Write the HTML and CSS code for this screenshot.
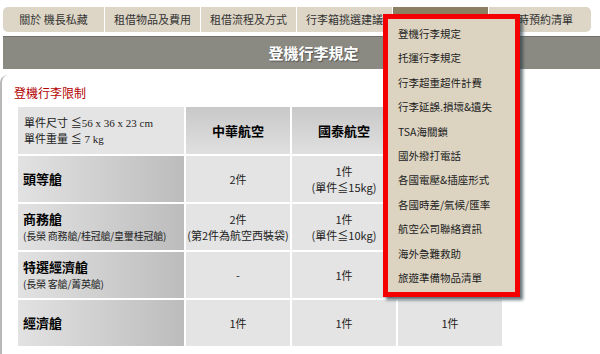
FILE: index.html
```html
<!DOCTYPE html>
<html lang="zh-Hant">
<head>
    <meta charset="UTF-8"/>
    <title>登機行李規定</title>
    <link rel="stylesheet" href="styles.css">
</head>
<body>
<ul class="tabs">
    <li class="tab">關於 機長私藏</li>
    <li class="tab">租借物品及費用</li>
    <li class="tab">租借流程及方式</li>
    <li class="tab">行李箱挑選建議</li>
    <li class="tab active">行李規定及須知</li>
    <li class="tab last">即時預約清單</li>
</ul>

<div class="title-bar">登機行李規定</div>

<div class="content">
    <h2 class="section-title">登機行李限制</h2>
    <table class="rules">
        <tr class="head">
            <td class="limit">單件尺寸 ≦56 x 36 x 23 cm<br/>單件重量 ≦ 7 kg</td>
            <th>中華航空</th>
            <th>國泰航空</th>
            <th></th>
        </tr>
        <tr>
            <td class="cabin"><b>頭等艙</b></td>
            <td>2件</td>
            <td>1件<br/>(單件≦15kg)</td>
            <td></td>
        </tr>
        <tr>
            <td class="cabin"><b>商務艙</b><br/><span class="sub">(長榮 商務艙/桂冠艙/皇璽桂冠艙)</span></td>
            <td>2件<br/>(第2件為航空西裝袋)</td>
            <td>1件<br/>(單件≦10kg)</td>
            <td></td>
        </tr>
        <tr>
            <td class="cabin"><b>特選經濟艙</b><br/><span class="sub">(長榮 客艙/菁英艙)</span></td>
            <td>-</td>
            <td>1件</td>
            <td></td>
        </tr>
        <tr>
            <td class="cabin"><b>經濟艙</b></td>
            <td>1件</td>
            <td>1件</td>
            <td>1件</td>
        </tr>
    </table>
</div>

<ul class="dropdown">
    <li>登機行李規定</li>
    <li>托運行李規定</li>
    <li>行李超重超件計費</li>
    <li>行李延誤.損壞&amp;遺失</li>
    <li>TSA海關鎖</li>
    <li>國外撥打電話</li>
    <li>各國電壓&amp;插座形式</li>
    <li>各國時差/氣候/匯率</li>
    <li>航空公司聯絡資訊</li>
    <li>海外急難救助</li>
    <li>旅遊準備物品清單</li>
</ul>
</body>
</html>
```

FILE: styles.css
```css
body {
    margin: 0;
    background-color: #fff;
    font-family: "Noto Sans CJK TC", "Noto Sans", sans-serif;
    color: #222;
    overflow: hidden;
}

.tabs {
    list-style: none;
    margin: 7px 0 0 3px;
    padding: 0;
    display: flex;
    height: 25px;
}

.tab {
    width: 95px;
    margin-right: 1px;
    background-color: #ddd6c6;
    font-size: 11px;
    line-height: 25px;
    text-align: center;
    color: #333;
}

.tab:first-child {
    width: 101px;
    border-radius: 5px 0 0 5px;
}

.tab.active {
    background-color: #8d8062;
    color: #3a3428;
}

.tab.last {
    width: 102px;
    border-radius: 0 5px 5px 0;
}

.title-bar {
    margin: 4px 0 0 3px;
    height: 32px;
    border-top: 1px solid #707069;
    background-color: #8b8a82;
    color: #fff;
    font-size: 15px;
    font-weight: bold;
    line-height: 32px;
    text-align: center;
    padding-left: 24px;
    text-shadow: 1px 1px 1px #555;
}

.content {
    margin-top: 6px;
    border-left: 2px solid #b8b8b8;
    border-top-left-radius: 8px;
    padding: 10px 0 0 14px;
    height: 270px;
}

.section-title {
    margin: 0 0 4px -2px;
    font-size: 12px;
    font-weight: normal;
    color: #b20000;
    line-height: 16px;
}

.rules {
    border-collapse: collapse;
    font-size: 11px;
    line-height: 16px;
}

.rules td, .rules th {
    border: 2px solid #fff;
    background-color: #e4e4e4;
    text-align: center;
    height: 46px;
    padding: 0;
    width: 104px;
}

.rules .head td, .rules .head th {
    height: 47px;
}

.rules th {
    background: linear-gradient(to bottom, #c8c8c8, #e0e0e0);
    font-size: 13px;
    color: #000;
}

.rules .limit {
    width: 160px;
    text-align: left;
    padding-left: 6px;
    font-family: "Liberation Serif", "Noto Sans CJK TC", serif;
    font-size: 11px;
    background-color: #e4e4e4;
}

.rules .cabin {
    text-align: left;
    padding-left: 5px;
    background: linear-gradient(to right, #e2e2e2, #bcbcbc);
}

.rules .cabin b {
    font-size: 13px;
    color: #000;
}

.rules .sub {
    font-size: 10px;
    letter-spacing: -0.2px;
    white-space: nowrap;
    color: #222;
}

.dropdown {
    position: absolute;
    left: 383px;
    top: 14px;
    width: 137px;
    height: 283px;
    margin: 0;
    padding: 5px 0 0 0;
    box-sizing: border-box;
    list-style: none;
    background-color: #dcd4c1;
    border: 5px solid #f40000;
    box-shadow: 3px 3px 3px rgba(40, 60, 70, 0.7);
}

.dropdown li {
    height: 24.4px;
    line-height: 20px;
    padding-left: 10px;
    font-size: 10.5px;
    color: #222;
}
```
